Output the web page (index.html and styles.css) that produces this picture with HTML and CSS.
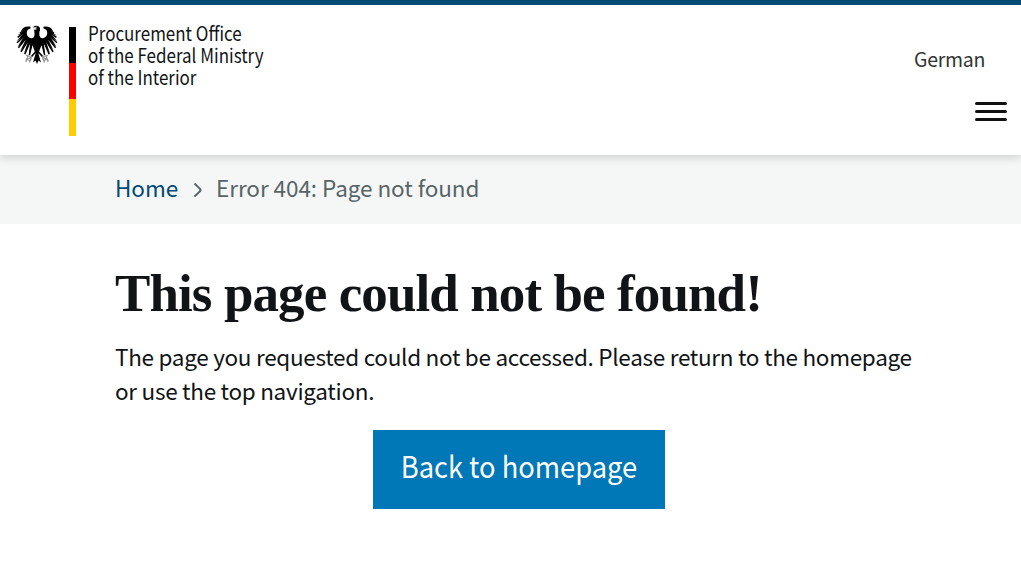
FILE: index.html
```html
<!DOCTYPE html>
<html lang="en">
<head>
<meta charset="utf-8">
<title>Error 404: Page not found</title>
<link rel="stylesheet" href="styles.css">
</head>
<body>
<header class="header">
  <a class="logo" href="#">
    <svg class="eagle" viewBox="0 0 42 40" aria-hidden="true">
      <g id="wing">
        <path d="M14.5 1.8C10 1.2 7 2 5 6L8 5.5L1.5 10.5L7.5 8.2L.8 16L8 11.5L1.6 21.5L9.8 14.5L4.2 26L12 16.5L7.8 29L14.2 18L12.8 30L17 19L18.5 14C13.5 13.5 10.5 11.5 10.8 7.5C11 5 12.5 3.8 14.5 3.5Z"/>
        <path d="M9 4.5L4 8M9 7L1.6 12.3M9.5 10L1 17.8M11 12L2.4 22.8M13 14L5 26.8M14.8 15L8.8 29.2M16.5 16L13.4 30" fill="none" stroke="#000" stroke-width="1.5"/>
        <path d="M19.5 27L15.5 31.5" stroke="#000" stroke-width="1.6"/>
        <path d="M16 31.5L10 30.5M15.5 32L9.5 35.5M15.5 32.5L13.5 37.5M12 31L11 33.5L13.5 35.5M10.5 34L10 37" fill="none" stroke="#8c8c8c" stroke-width="1.2"/>
      </g>
      <use href="#wing" transform="matrix(-1 0 0 1 42 0)"/>
      <path d="M15.5 13.5C19.5 13 18.6 8 18 4.5L24 3.5C23 8 22.5 13 26.5 13.5C27 20 23.5 23 22.5 29L25 37.5L22.5 35.5L21 39L19.5 35.5L17 37.5L19.5 29C18.5 23 15 20 15.5 13.5Z"/>
      <path d="M17 2.5C18 .2 23.6 0 24 3.5V6H18.5L20.5 3.5Z"/>
      <path d="M17 3L20.8 2.2M17.5 4.6L20.5 4" stroke="#c8c8c8" stroke-width="1"/>
    </svg>
    <span class="flag"></span>
    <span class="office">
      Procurement Office<br>
      of the Federal Ministry<br>
      of the Interior
    </span>
  </a>
  <div class="tools">
    <a class="language" href="#">German</a>
    <button class="menu" aria-label="Menu"><i></i><i></i><i></i></button>
  </div>
</header>
<nav class="breadcrumb">
  <a class="home" href="#">Home</a>
  <svg class="chevron" viewBox="0 0 10 16" aria-hidden="true"><path d="M1.5 1.5L6.8 6.6Q8.2 8 6.8 9.4L1.5 14.5" fill="none" stroke="#596468" stroke-width="2"/></svg>
  <span class="current">Error 404: Page not found</span>
</nav>
<main class="content">
  <h1 class="title">This page could not be found!</h1>
  <p class="message">The page you requested could not be accessed. Please return to the homepage<br>or use the top navigation.</p>
  <a class="button" href="#"><span class="label">Back to homepage</span></a>
</main>
</body>
</html>
```

FILE: styles.css
```css
* { box-sizing: border-box; }
body {
  margin: 0;
  background: #fff;
  color: #111416;
  font-family: "Noto Sans CJK SC", "Open Sans", sans-serif;
  white-space: nowrap;
}
a { color: inherit; text-decoration: none; }
.header {
  position: relative;
  display: flex;
  justify-content: space-between;
  height: 155px;
  border-top: 5px solid #004b76;
  background: #fff;
  box-shadow: 0 3px 8px rgba(0, 0, 0, .15);
}
.logo { display: flex; align-items: flex-start; padding: 20px 0 0 16px; }
.eagle { width: 42px; height: 40px; }
.flag {
  width: 7px;
  height: 109px;
  margin: 2px 12px 0 11px;
  background: linear-gradient(#000 0 36px, #f00 36px 72px, #fc0 72px);
}
.office {
  margin-top: -3px;
  font-size: 19.5px;
  line-height: 22px;
  transform: scaleX(.87);
  transform-origin: left;
}
.tools { display: flex; flex-direction: column; align-items: flex-end; padding: 40px 14px 0 0; }
.language { margin-right: 22px; font-size: 19.5px; line-height: 28px; letter-spacing: -.3px; color: #333; }
.menu { display: flex; flex-direction: column; gap: 5px; width: 32px; margin-top: 29px; padding: 0; border: 0; background: none; }
.menu i { width: 32px; height: 3px; border-radius: 1.5px; background: #111; }
.breadcrumb {
  display: flex;
  align-items: center;
  height: 69px;
  padding: 0 0 5px 115px;
  background: #f5f7f7;
  font-size: 22.5px;
  line-height: 32px;
  letter-spacing: -.06px;
}
.home { color: #004b76; }
.chevron { width: 10px; height: 16px; margin: 5px 13px 0 15px; }
.current { color: #596468; }
.content { display: flex; flex-direction: column; padding: 39px 99px 0 115px; }
.title { margin: 0; font: bold 53px/60px "Liberation Serif", serif; letter-spacing: -.9px; }
.message { margin: 16px 0 0; font-size: 22.5px; line-height: 34px; letter-spacing: -.29px; }
.button {
  align-self: center;
  display: flex;
  align-items: center;
  justify-content: center;
  width: 292px;
  height: 79px;
  margin-top: 23px;
  padding-bottom: 10px;
  background: #0077b6;
  color: #fff;
  font-size: 30px;
}
.label { transform: scaleX(.91); }
```
